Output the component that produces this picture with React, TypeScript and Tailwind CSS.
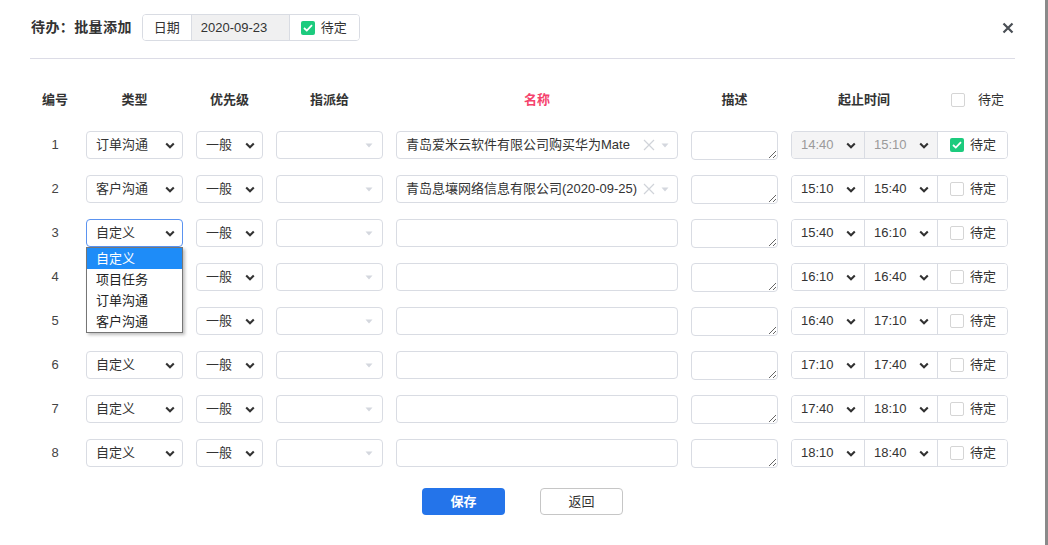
import React from "react";

const Chevron = ({ className = "" }: { className?: string }) => (
  <svg width="10" height="7" viewBox="0 0 10 7" className={className}>
    <path d="M1.2 1.5 L5 5.2 L8.8 1.5" fill="none" stroke="currentColor" strokeWidth="2.1" />
  </svg>
);

const Caret = () => (
  <svg width="8" height="5" viewBox="0 0 8 5">
    <path d="M0.5 0.5 L7.5 0.5 L4 4.5 Z" fill="#d4d7de" />
  </svg>
);

const ClearX = () => (
  <svg width="12" height="12" viewBox="0 0 12 12">
    <path d="M1 1 L11 11 M11 1 L1 11" stroke="#d0d3d9" strokeWidth="1.2" />
  </svg>
);

const Check = ({ checked }: { checked: boolean }) =>
  checked ? (
    <span className="flex h-[14px] w-[14px] items-center justify-center rounded-[2px] bg-[#1ccb7e]">
      <svg width="10" height="8" viewBox="0 0 10 8">
        <path d="M1 4 L3.8 6.6 L9 1.2" fill="none" stroke="white" strokeWidth="1.8" />
      </svg>
    </span>
  ) : (
    <span className="block h-[14px] w-[14px] rounded-[2px] border border-[#d5d5d5] bg-white" />
  );

type Row = {
  type: string;
  name?: string;
  start: string;
  end: string;
  disabled?: boolean;
  checked?: boolean;
  focus?: boolean;
  covered?: boolean;
};

const rows: Row[] = [
  { type: "订单沟通", name: "青岛爱米云软件有限公司购买华为Mate", start: "14:40", end: "15:10", disabled: true, checked: true },
  { type: "客户沟通", name: "青岛息壤网络信息有限公司(2020-09-25)", start: "15:10", end: "15:40" },
  { type: "自定义", start: "15:40", end: "16:10", focus: true },
  { type: "自定义", start: "16:10", end: "16:40", covered: true },
  { type: "自定义", start: "16:40", end: "17:10", covered: true },
  { type: "自定义", start: "17:10", end: "17:40" },
  { type: "自定义", start: "17:40", end: "18:10" },
  { type: "自定义", start: "18:10", end: "18:40" },
];

function RowView({ r, i }: { r: Row; i: number }) {
  return (
    <div className="relative flex h-[28px] items-center">
      <div className="w-[50px] text-center text-[13px] text-[#444]">{i + 1}</div>
      <div className="ml-[6px] relative">
        {r.covered ? (
          <div className="h-[28px] w-[97px]" />
        ) : (
          <div
            className={
              "flex h-[28px] w-[97px] items-center justify-between rounded-[4px] border bg-white pl-[9px] pr-[7px] text-[13px] text-[#333] " +
              (r.focus ? "border-[#5b93f0]" : "border-[#d9dce3]")
            }
          >
            <span>{r.type}</span>
            <Chevron className="text-[#333]" />
          </div>
        )}
        {r.focus && (
          <div className="absolute left-0 top-[28px] z-10 w-[97px] border border-[#767676] bg-white text-[13px] text-[#222] shadow-[2px_2px_3px_rgba(0,0,0,0.25)]">
            <div className="flex h-[21px] items-center bg-[#1e8cf8] pl-[9px] text-white">自定义</div>
            <div className="flex h-[21px] items-center pl-[9px]">项目任务</div>
            <div className="flex h-[21px] items-center pl-[9px]">订单沟通</div>
            <div className="flex h-[21px] items-center pl-[9px]">客户沟通</div>
          </div>
        )}
      </div>
      <div className="ml-[13px] flex h-[28px] w-[67px] items-center justify-between rounded-[4px] border border-[#d9dce3] bg-white pl-[9px] pr-[7px] text-[13px] text-[#333]">
        <span>一般</span>
        <Chevron className="text-[#333]" />
      </div>
      <div className="ml-[13px] flex h-[28px] w-[107px] items-center justify-end rounded-[4px] border border-[#d9dce3] bg-white pr-[9px]">
        <Caret />
      </div>
      <div className="ml-[13px] flex h-[28px] w-[282px] items-center rounded-[4px] border border-[#d9dce3] bg-white pl-[9px] pr-[8px] text-[13px] text-[#333]">
        <span className="flex-1 truncate">{r.name ?? ""}</span>
        {r.name && (
          <>
            <span className="mr-[6px] flex items-center">
              <ClearX />
            </span>
            <Caret />
          </>
        )}
      </div>
      <textarea className="ml-[13px] h-[29px] w-[87px] rounded-[4px] border border-[#d9dce3] bg-white outline-none" />
      <div className="ml-[13px] flex h-[28px] w-[217px] overflow-hidden rounded-[4px] border border-[#d9dce3] text-[13px]">
        <div
          className={
            "flex w-[73px] items-center justify-between border-r border-[#d9dce3] pl-[9px] pr-[8px] " +
            (r.disabled ? "bg-[#f4f4f5] text-[#9a9a9a]" : "bg-white text-[#333]")
          }
        >
          <span>{r.start}</span>
          <Chevron className="text-[#333]" />
        </div>
        <div
          className={
            "flex w-[73px] items-center justify-between border-r border-[#d9dce3] pl-[9px] pr-[8px] " +
            (r.disabled ? "bg-[#f4f4f5] text-[#9a9a9a]" : "bg-white text-[#333]")
          }
        >
          <span>{r.end}</span>
          <Chevron className="text-[#333]" />
        </div>
        <div className="flex flex-1 items-center gap-[6px] bg-white pl-[12px] text-[#333]">
          <Check checked={!!r.checked} />
          <span>待定</span>
        </div>
      </div>
    </div>
  );
}

export default function App() {
  return (
    <div className="flex h-[545px] w-[1048px] font-['Liberation_Sans','Noto_Sans_CJK_SC',sans-serif]">
      <div className="h-full w-[1045px] bg-white px-[30px]">
        <div className="flex items-center pt-[14px]">
          <div className="ml-[1px] text-[14px] font-bold tracking-[0.4px] text-[#333]">待办：批量添加</div>
          <div className="ml-[10px] flex h-[27px] overflow-hidden rounded-[4px] border border-[#d9dce3] text-[13px] text-[#333]">
            <div className="flex w-[49px] items-center justify-center border-r border-[#d9dce3] bg-white">日期</div>
            <div className="flex w-[98px] items-center border-r border-[#d9dce3] bg-[#f0f0f1] pl-[9px]">2020-09-23</div>
            <div className="flex w-[69px] items-center gap-[6px] bg-white pl-[11px]">
              <Check checked />
              <span>待定</span>
            </div>
          </div>
          <div className="flex-1" />
          <svg width="12" height="12" viewBox="0 0 12 12" className="mr-[1px]">
            <path d="M1.5 1.5 L10.5 10.5 M10.5 1.5 L1.5 10.5" stroke="#4a4f55" strokeWidth="2.2" />
          </svg>
        </div>
        <div className="mt-[17px] h-px bg-[#dcdce6]" />
        <div className="mt-[27px] flex h-[28px] items-center text-[13px] font-bold text-[#333]">
          <div className="w-[50px] text-center">编号</div>
          <div className="ml-[6px] w-[97px] text-center">类型</div>
          <div className="ml-[13px] w-[67px] text-center">优先级</div>
          <div className="ml-[13px] w-[107px] text-center">指派给</div>
          <div className="ml-[13px] w-[282px] text-center text-[#f5426c]">名称</div>
          <div className="ml-[13px] w-[87px] text-center">描述</div>
          <div className="ml-[13px] w-[146px] text-center">起止时间</div>
          <div className="flex flex-1 items-center gap-[13px] pl-[14px] font-normal">
            <Check checked={false} />
            <span>待定</span>
          </div>
        </div>
        <div className="mt-[17px] flex flex-col gap-[16px]">
          {rows.map((r, i) => (
            <RowView key={i} r={r} i={i} />
          ))}
        </div>
        <div className="mt-[21px] flex justify-center gap-[35px]">
          <button className="h-[27px] w-[83px] rounded-[4px] bg-[#2474ea] text-[13px] font-bold text-white">保存</button>
          <button className="h-[27px] w-[83px] rounded-[4px] border border-[#c6c6c6] bg-white text-[13px] text-[#333]">返回</button>
        </div>
      </div>
      <div className="h-full flex-1 bg-[#8a8a8a]" />
    </div>
  );
}
